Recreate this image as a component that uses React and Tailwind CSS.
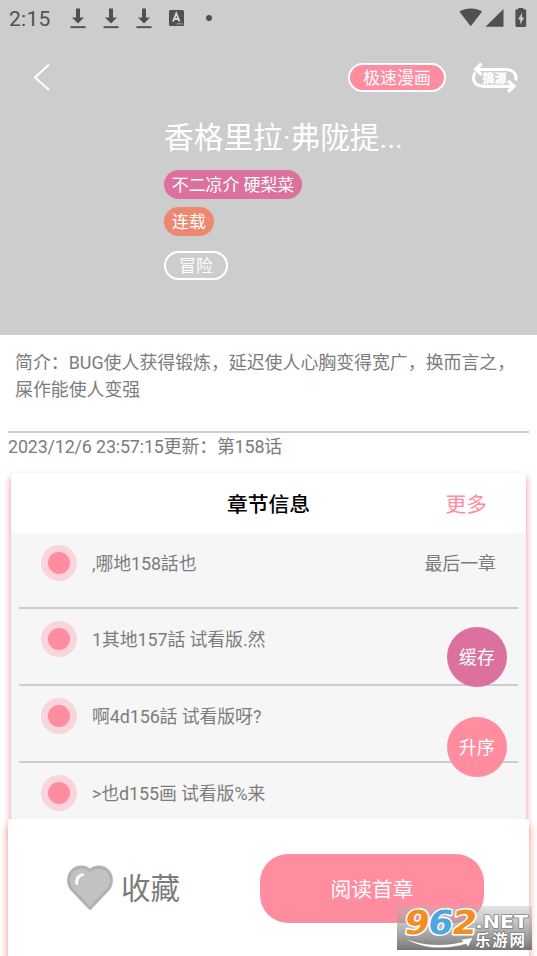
import React from 'react';

const chapters = [
    { title: ',哪地158話也', note: '最后一章' },
    { title: '1其地157話 试看版.然' },
    { title: '啊4d156話 试看版呀?' },
    { title: '>也d155画 试看版%来' }
];

const DownloadIcon = () => (
    <svg width="16" height="21" viewBox="0 0 16 21" fill="#505050">
        <path d="M6 0.5h4v9h4L8 15.5 2 9.5h4z" />
        <path d="M0.5 18.2h15v1.9h-15z" />
    </svg>
);

const StatusBar = () => (
    <div className="flex h-[36px] items-center justify-between pl-[9px] pr-[10px] text-[#505050]">
        <div className="flex items-center">
            <span className="w-[61px] pt-[1px] text-[21px] leading-[36px] tracking-[0.3px]">2:15</span>
            <div className="flex gap-[17px]">
                <DownloadIcon />
                <DownloadIcon />
                <DownloadIcon />
            </div>
            <svg className="ml-[17px]" width="15" height="16" viewBox="0 0 15 16">
                <rect width="15" height="16" rx="1.5" fill="#505050" />
                <path d="M4 11.5 7.3 3.5 10.6 11.5M5.2 9h4.2" fill="none" stroke="#d5d5d5" strokeWidth="1.9" />
                <path d="M8 13.8h1.2M10.3 13.8h1.2M12.5 13.8h1" stroke="#d5d5d5" strokeWidth="1.2" />
            </svg>
            <span className="ml-[22px] h-[6px] w-[6px] rounded-full bg-[#505050]" />
        </div>
        <svg width="68" height="21" viewBox="0 0 68 21" fill="#505050">
            <path d="M0.5 3.7C6.5-0.6 17.2-0.6 23 3.7L11.7 18.3z" />
            <path d="M44.5 1v17.7H26.5z" />
            <path d="M59.3-0.5h5v1.7h1.5q1.4 0 1.4 1.4v15q0 1.4-1.4 1.4h-8q-1.4 0-1.4-1.4v-15q0-1.4 1.4-1.4h1.5z" />
            <path d="M63.2 4.5 59 11.5h2.3v5L65.2 9.5h-2.3z" fill="#cdcdcd" />
        </svg>
    </div>
);

const SwapIcon = () => (
    <svg width="48" height="31" viewBox="0 0 48 31" fill="none" stroke="#fff" strokeWidth="3.2">
        <path d="M4 7.500h30.500c6.500 0 10.500 3.500 10.500 8.500v2.500" />
        <path d="M43 24.300H13C6.500 24.300 2.500 21 2.500 16c0-2 .5-4 1.800-5.500" />
        <path d="M10.500 1.500 4.500 7.300l6 5.500" />
        <path d="M37 18.800l6 5.500-6 5.500" />
        <text x="23.5" y="20.5" textAnchor="middle" fontSize="12" fontWeight="bold" fill="#fff" stroke="#fff" strokeWidth="0.3">搞源</text>
    </svg>
);

const HeartIcon = () => (
    <svg width="46" height="46" viewBox="0 0 46 46">
        <path
            d="M23 43.5 4.8 24.2C-0.3 18 1.2 9 6.2 5 11.5.6 18.5 1.5 23 5.4 27.5 1.5 34.5.6 39.8 5c5 4 6.5 13 1.4 19.2z"
            fill="#c2c2c2"
            stroke="#b1b1b1"
            strokeWidth="3"
            strokeLinejoin="round"
        />
        <path d="M9.7 18.5C9.6 13.5 11.5 10.5 15.5 9.7" fill="none" stroke="#fff" strokeWidth="3" strokeLinecap="round" />
    </svg>
);

const Watermark = () => (
    <svg className="absolute left-[397px] top-[894px]" width="135" height="62" viewBox="0 -12 135 62">
        <defs>
            <linearGradient id="plate" x1="0" y1="0" x2="0" y2="1">
                <stop offset="0" stopColor="#b8b8b8" stopOpacity="0.4" />
                <stop offset="1" stopColor="#6e6e6e" stopOpacity="0.95" />
            </linearGradient>
        </defs>
        <rect width="135" height="44" fill="url(#plate)" />
        <g transform="skewX(-9)" fontFamily="DejaVu Sans" fontWeight="bold" fontSize="33" stroke="#fff" strokeWidth="3" paintOrder="stroke" strokeLinejoin="round">
            <text x="10.5" y="28" textLength="25" lengthAdjust="spacingAndGlyphs" fill="#f58e22">9</text>
            <text x="34" y="28" textLength="25" lengthAdjust="spacingAndGlyphs" fill="#4da6e0">6</text>
            <text x="58" y="28" textLength="25" lengthAdjust="spacingAndGlyphs" fill="#f58e22">2</text>
        </g>
        <path d="M7 31.5C25 40 47 40.5 66 35.500L63.5 33.5 76 31.5 71 41 69 38C48 44.5 22 43 7 31.5z" fill="#fff" stroke="#777" strokeWidth="0.5" />
        <g fill="#fff" stroke="#6b6b6b" strokeWidth="1.2" paintOrder="stroke" fontWeight="bold">
            <text x="78" y="22" fontFamily="DejaVu Sans" fontSize="18" textLength="53" lengthAdjust="spacingAndGlyphs">.NET</text>
            <text x="78" y="39.5" fontSize="15.5" textLength="50">乐游网</text>
        </g>
    </svg>
);

const App = () => {
    return (
        <div className="relative flex h-[956px] w-[537px] flex-col overflow-hidden bg-white font-[Roboto,'Noto_Sans_CJK_SC',sans-serif] text-[#7c7c7c]">
            {/* Cover header */}
            <header className="h-[334.5px] shrink-0 bg-[#cdcdcd] text-white">
                <StatusBar />
                <div className="mt-[25px] flex h-[32px] items-center pl-[33px] pr-[18px]">
                    <svg width="18" height="28" viewBox="0 0 18 28" fill="none" stroke="#fff" strokeWidth="2">
                        <path d="M16 1.5 2 14.5 16 27" />
                    </svg>
                    <div className="ml-auto mr-[25px] flex h-[29px] w-[98px] items-center justify-center rounded-full border-2 border-white bg-[#ff8c9f] pt-[2px] text-[16.9px] leading-none">
                        极速漫画
                    </div>
                    <SwapIcon />
                </div>
                <div className="flex flex-col items-start pl-[164px] pt-[21px]">
                    <h1 className="h-[44px] whitespace-nowrap pt-[1px] text-[29.8px] leading-[46px] tracking-[-0.1px]">香格里拉·弗陇提...</h1>
                    <span className="mt-[12px] flex h-[29px] w-[138px] items-center justify-center whitespace-nowrap rounded-full bg-[#dc719f] pt-[2px] text-[16.9px]">
                        不二凉介 硬梨菜
                    </span>
                    <span className="mt-[8px] flex h-[29px] w-[50px] items-center justify-center rounded-full bg-[#ed876f] pt-[2px] text-[16.9px]">
                        连载
                    </span>
                    <span className="mt-[15px] flex h-[29px] w-[64px] items-center justify-center rounded-full border-2 border-white pt-[2px] text-[16.9px]">
                        冒险
                    </span>
                </div>
            </header>

            {/* Summary */}
            <p className="h-[96.5px] shrink-0 whitespace-nowrap pl-[15px] pt-[14.5px] text-[17.9px] leading-[27px]">
                简介：BUG使人获得锻炼，延迟使人心胸变得宽广，换而言之，
                <br />
                屎作能使人变强
            </p>
            <div className="mx-[8px] h-[41.5px] shrink-0 border-t-2 border-[#cdcdcd] text-[17.9px] leading-[27px] tracking-[-0.16px]">
                2023/12/6 23:57:15更新：第158话
            </div>

            {/* Chapter list */}
            <section className="mx-[11px] h-[360px] shrink-0 rounded-t-[4px] bg-[#f6f6f6] shadow-[0_4px_6px_1px_#ff9caf]">
                <div className="grid h-[60px] grid-cols-3 items-center rounded-t-[4px] bg-white pt-[6px]">
                    <h2 className="col-start-2 text-center text-[20.8px] font-medium text-black">章节信息</h2>
                    <span className="pr-[39px] text-right text-[20.8px] text-[#ff8c9f]">更多</span>
                </div>
                {chapters.map((chapter) => (
                    <div key={chapter.title} className="mx-[8px] flex h-[76.8px] items-start border-b-2 border-[#cdcdcd] pl-[22px] pr-[22px] pt-[12px]">
                        <span className="flex h-[36px] w-[36px] items-center justify-center rounded-full bg-[#fad5db]">
                            <span className="h-[22px] w-[22px] rounded-full bg-[#ff8c9f]" />
                        </span>
                        <span className="ml-[15px] text-[17.9px] leading-[38px] tracking-[-0.1px]">{chapter.title}</span>
                        <span className="ml-auto text-[17.9px] leading-[38px]">{chapter.note}</span>
                    </div>
                ))}
            </section>

            {/* Floating actions */}
            <div className="absolute left-[447px] top-[627px] flex flex-col gap-[30px] text-[17.9px] text-white">
                <button className="h-[60px] w-[60px] rounded-full bg-[#dc719f] pt-[2px]">缓存</button>
                <button className="h-[60px] w-[60px] rounded-full bg-[#ff8c9f] pt-[2px]">升序</button>
            </div>

            {/* Bottom bar overlaps the end of the list */}
            <footer className="absolute inset-x-[8px] top-[818.5px] flex h-[160px] items-start bg-white pl-[59px] shadow-[0_7px_8px_0px_#f2917f]">
                <div className="mt-[46px] flex h-[46px] w-[193px] items-center">
                    <HeartIcon />
                    <span className="ml-[8px] pt-[2px] text-[29.5px] leading-[46px]">收藏</span>
                </div>
                <button className="mt-[35.5px] h-[69px] w-[224px] rounded-[28px] bg-[#ff8c9f] pt-[4px] text-[20.8px] text-white">阅读首章</button>
            </footer>

            <Watermark />
        </div>
    );
};

export default App;
